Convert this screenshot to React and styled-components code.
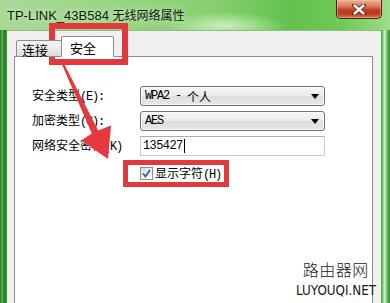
import React from "react";
import styled, { createGlobalStyle } from "styled-components";

const Global = createGlobalStyle`
  html, body { margin: 0; padding: 0; background: #fff; }
  body { width: 390px; height: 303px; overflow: hidden; }
  #root { width: 390px; height: 303px; }
`;

const CJK = `"Noto Sans CJK SC", "Noto Sans", sans-serif`;

const Window = styled.div`
  position: relative;
  width: 390px;
  height: 303px;
  display: flex;
  flex-direction: column;
  overflow: hidden;
  background: linear-gradient(90deg,
    #246f24 0px, #5fb655 2px, #287d28 4px, #3a9436 7px,
    #3e9a3a 380px, #56bb4e 382px, #e6f5e0 385px, #5cc052 387px, #2f9a2f 390px);
`;

const TitleBar = styled.div`
  height: 30px;
  flex: none;
  display: flex;
  align-items: flex-start;
  background:
    radial-gradient(ellipse 60px 14px at 225px 26px, rgba(230,255,220,0.7), rgba(230,255,220,0) 100%),
    linear-gradient(90deg, #a9d997 0%, #9ad585 30%, #86cf6e 55%, #62c14c 75%, #6fca58 88%, #9fdc8a 100%);
`;

const Title = styled.div`
  padding: 7px 0 0 7px;
  font-family: ${CJK};
  font-size: 12px;
  line-height: 15px;
  color: #0d1a0d;
  text-shadow: 0 0 6px rgba(255,255,255,0.8);
  white-space: nowrap;
`;

const TitleLat = styled.span`
  font-family: "Liberation Sans", sans-serif;
  font-size: 13px;
`;

const CloseButton = styled.div`
  margin-left: auto;
  margin-right: 8px;
  width: 46px;
  height: 19px;
  box-sizing: border-box;
  border: 1px solid #4b1e12;
  border-top: none;
  border-radius: 0 0 5px 5px;
  background: linear-gradient(180deg, #eab39c 0%, #dd7a58 35%, #c2401f 55%, #b9391a 75%, #d9774c 100%);
  display: flex;
  align-items: center;
  justify-content: center;
  box-shadow: inset 0 0 0 1px rgba(255,200,180,0.45);
`;

const Body = styled.div`
  flex: 1;
  display: flex;
  padding: 0 9px 0 7px;
  min-height: 0;
`;

const Client = styled.div`
  flex: 1;
  background: #f0f0f0;
  border-top: 1px solid #8fb98a;
  display: flex;
  flex-direction: column;
  padding: 5px 8px 0 7px;
  min-height: 0;
`;

const TabStrip = styled.div`
  height: 21px;
  display: flex;
  align-items: flex-end;
  padding-left: 2px;
  position: relative;
  z-index: 1;
  margin-bottom: -1px;
`;

const Tab = styled.div`
  box-sizing: border-box;
  height: ${(p) => (p.$active ? 21 : 17)}px;
  width: ${(p) => p.$w}px;
  margin-left: ${(p) => (p.$active ? -1 : 0)}px;
  border: 1px solid #898c95;
  border-bottom: ${(p) => (p.$active ? "1px solid #fff" : "1px solid #898c95")};
  border-radius: 2px 2px 0 0;
  background: ${(p) => (p.$active ? "#fff" : "linear-gradient(180deg, #f3f3f3 0%, #ebebeb 50%, #dddddd 100%)")};
  font-family: ${CJK};
  font-size: 13px;
  line-height: 15px;
  color: #000;
  padding: ${(p) => (p.$active ? "3px 0 0 8px" : "1px 0 0 5px")};
  position: relative;
  z-index: ${(p) => (p.$active ? 2 : 1)};
`;

const Panel = styled.div`
  flex: 1;
  background: #fff;
  border: 1px solid #898c95;
  border-bottom: none;
  padding: 29px 0 0 17px;
`;

const Form = styled.div`
  display: grid;
  grid-template-columns: 108px 185px;
  grid-auto-rows: 20px;
  row-gap: 5px;
  align-items: center;
`;

const Label = styled.div`
  font-family: ${CJK};
  font-size: 12px;
  line-height: 14px;
  color: #000;
  white-space: pre;
`;

const Lat = styled.span`
  font-family: "Liberation Mono", monospace;
  font-size: 12px;
  letter-spacing: -1.2px;
`;

const Select = styled.div`
  box-sizing: border-box;
  height: 20px;
  border: 1px solid #707070;
  border-radius: 3px;
  background: linear-gradient(180deg, #f6f6f6 0%, #ebebeb 48%, #dedede 52%, #e6e6e6 100%);
  display: flex;
  align-items: center;
  padding: 0 0 0 4px;
  font-family: ${CJK};
  font-size: 12px;
  color: #000;
  white-space: pre;
  box-shadow: inset 0 0 0 1px rgba(255,255,255,0.7);
`;

const Arrow = styled.div`
  margin-left: auto;
  margin-right: 5px;
  width: 0;
  height: 0;
  border-left: 4px solid transparent;
  border-right: 4px solid transparent;
  border-top: 5px solid #000;
`;

const Input = styled.div`
  box-sizing: border-box;
  height: 20px;
  border: 1px solid #c2cbd6;
  border-top-color: #abadb3;
  background: #fff;
  display: flex;
  align-items: center;
  padding-left: 2px;
  font-family: "Liberation Mono", monospace;
  font-size: 12px;
  letter-spacing: -0.6px;
  color: #000;
`;

const Caret = styled.span`
  display: inline-block;
  width: 1px;
  height: 14px;
  background: #000;
  margin-left: 1px;
`;

const CheckRow = styled.div`
  grid-column: 2;
  display: flex;
  align-items: center;
  gap: 2px;
  margin-top: 5px;
`;

const Box = styled.div`
  box-sizing: border-box;
  width: 13px;
  height: 13px;
  border: 1px solid #8e8f8f;
  background: linear-gradient(135deg, #dcdcdc 0%, #f2f2f2 60%, #ffffff 100%);
  display: flex;
  align-items: center;
  justify-content: center;
`;

const RedFrame = styled.div`
  position: absolute;
  box-sizing: border-box;
  left: ${(p) => p.$x}px;
  top: ${(p) => p.$y}px;
  width: ${(p) => p.$w}px;
  height: ${(p) => p.$h}px;
  border: ${(p) => p.$t}px solid #e2393d;
  pointer-events: none;
`;

const Overlay = styled.svg`
  position: absolute;
  left: 0;
  top: 0;
  pointer-events: none;
`;

const Watermark = styled.div`
  position: absolute;
  right: 12px;
  bottom: 6px;
  display: flex;
  flex-direction: column;
  align-items: center;
  color: #1a1a1a;
  pointer-events: none;
`;

const WmCn = styled.div`
  font-family: ${CJK};
  font-weight: 300;
  font-size: 16px;
  line-height: 18px;
  letter-spacing: 0.5px;
`;

const WmEn = styled.div`
  font-family: "DejaVu Sans Condensed", "Liberation Sans Narrow", "Liberation Sans", sans-serif;
  font-size: 14px;
  line-height: 14px;
  margin-top: 5px;
  transform: scaleX(0.95);
`;

export default function App() {
  return (
    <>
      <Global />
      <Window>
        <TitleBar>
          <Title><TitleLat>TP-LINK_43B584 </TitleLat>无线网络属性</Title>
          <CloseButton>
            <svg width="14" height="11" viewBox="0 0 14 11">
              <path d="M2 1 L12 10 M12 1 L2 10" stroke="#5a2010" strokeWidth="4" strokeLinecap="round" />
              <path d="M2.5 1.5 L11.5 9.5 M11.5 1.5 L2.5 9.5" stroke="#fff" strokeWidth="2.4" strokeLinecap="round" />
            </svg>
          </CloseButton>
        </TitleBar>
        <Body>
          <Client>
            <TabStrip>
              <Tab $w={46}>连接</Tab>
              <Tab $w={53} $active>安全</Tab>
            </TabStrip>
            <Panel>
              <Form>
                <Label>安全类型<Lat>(E):</Lat></Label>
                <Select>
                  <Lat>WPA2 - </Lat>个人
                  <Arrow />
                </Select>
                <Label>加密类型<Lat>(C):</Lat></Label>
                <Select>
                  <Lat>AES</Lat>
                  <Arrow />
                </Select>
                <Label>网络安全密钥<Lat>(K)</Lat></Label>
                <Input>
                  135427<Caret />
                </Input>
                <CheckRow>
                  <Box>
                    <svg width="9" height="9" viewBox="0 0 9 9">
                      <path d="M1 4.5 L3.5 7.5 L8 1" fill="none" stroke="#3d5a9c" strokeWidth="1.8" />
                    </svg>
                  </Box>
                  <Label>显示字符<Lat>(H)</Lat></Label>
                </CheckRow>
              </Form>
            </Panel>
          </Client>
        </Body>
        <RedFrame $x={49} $y={23} $w={79} $h={42} $t={6} />
        <RedFrame $x={123} $y={160} $w={106} $h={27} $t={5} />
        <Overlay width="390" height="303" viewBox="0 0 390 303">
          <polygon
            points="62,64.4 63.9,63.6 98.2,130.5 111,125.5 108,159 81,140.5 91.8,133.5"
            fill="#e5393e"
          />
        </Overlay>
        <Watermark>
          <WmCn>路由器网</WmCn>
          <WmEn>LUYOUQI.NET</WmEn>
        </Watermark>
      </Window>
    </>
  );
}
